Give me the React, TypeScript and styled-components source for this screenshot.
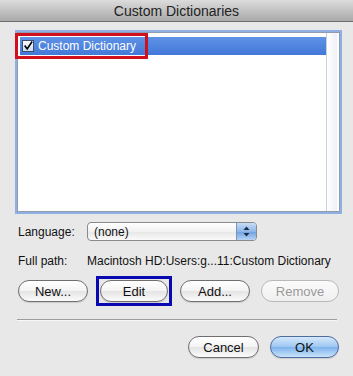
import React, { FC } from "react";
import styled, { createGlobalStyle, css } from "styled-components";

const GlobalStyle = createGlobalStyle`
  html, body {
    margin: 0;
    padding: 0;
    background: #e8e8e8;
  }
`;

const Window = styled.div`
  width: 353px;
  height: 376px;
  background: #e8e8e8;
  font-family: "Liberation Sans", Arial, sans-serif;
  color: #111;
  display: flex;
  flex-direction: column;
  overflow: hidden;
`;

const TitleBar = styled.div`
  height: 22px;
  box-sizing: border-box;
  display: flex;
  align-items: center;
  justify-content: center;
  background: linear-gradient(#dcdcdc, #bdbdbd 60%, #a9a9a9);
  border-bottom: 1px solid #6e6e6e;
  font-size: 14px;
  color: #222;
  padding-top: 1px;
`;

const Content = styled.div`
  display: flex;
  flex-direction: column;
  padding: 10px 13px 0 17px;
`;

const ListBox = styled.div`
  width: 323px;
  height: 180px;
  box-sizing: border-box;
  background: #fff;
  border: 1px solid #8f9bb0;
  box-shadow: 0 0 0 2px #8fb0e0;
  padding: 4px 2px 0 2px;
  display: flex;
`;

const ListBody = styled.div`
  flex: 1;
`;

const ScrollColumn = styled.div`
  width: 10px;
  margin-top: -4px;
  border-left: 1px solid #c9d0dc;
  background: linear-gradient(90deg, #ffffff, #eef1f6);
`;

const Row = styled.div<{ $selected?: boolean }>`
  height: 18px;
  display: flex;
  align-items: center;
  ${({ $selected }) =>
    $selected &&
    css`
      background: linear-gradient(#5f93e6, #4278d8);
      color: #fff;
    `}
`;

const Marked = styled.span`
  display: inline-flex;
  align-items: center;
  gap: 4px;
  padding: 0 8px 0 3px;
  height: 18px;
  outline: 3px solid #d0101c;
  outline-offset: 1px;
  margin-left: -1px;
`;

const Check = styled.span`
  width: 12px;
  height: 12px;
  box-sizing: border-box;
  border: 1px solid #3d4f70;
  background: linear-gradient(#ffffff, #c9dcf3);
  display: inline-flex;
  align-items: center;
  justify-content: center;
`;

const ItemText = styled.span`
  font-size: 12px;
`;

const FieldRow = styled.div<{ $top: number }>`
  display: flex;
  align-items: center;
  margin-top: ${({ $top }) => $top}px;
  font-size: 12px;
`;

const Label = styled.span`
  width: 69px;
  flex-shrink: 0;
  padding-left: 1px;
`;

const Popup = styled.div`
  width: 170px;
  height: 19px;
  box-sizing: border-box;
  border: 1px solid #8a8a8a;
  border-radius: 4px;
  background: linear-gradient(#ffffff, #f1f1f1 50%, #e6e6e6 51%, #fafafa);
  display: flex;
  align-items: center;
  overflow: hidden;
`;

const PopupText = styled.span`
  flex: 1;
  padding-left: 6px;
  font-size: 12px;
`;

const PopupArrows = styled.span`
  width: 19px;
  height: 100%;
  border-left: 1px solid #7e93b3;
  background: linear-gradient(#c6dcf6, #8fb6e8 50%, #6f9fe0 51%, #b6d3f5);
  display: flex;
  align-items: center;
  justify-content: center;
`;

const ButtonRow = styled.div<{ $top: number; $end?: boolean }>`
  display: flex;
  align-items: center;
  margin-top: ${({ $top }) => $top}px;
  justify-content: ${({ $end }) => ($end ? "flex-end" : "space-between")};
  gap: 11px;
  padding-left: 1px;
  padding-right: 1px;
`;

const Button = styled.button<{ $w: number; $primary?: boolean }>`
  flex: 0 0 ${({ $w }) => $w}px;
  width: ${({ $w }) => $w}px;
  height: 22px;
  box-sizing: border-box;
  border-radius: 11px;
  border: 1px solid #6f6f6f;
  background: linear-gradient(#ffffff, #f3f3f3 50%, #e4e4e4 51%, #fbfbfb);
  font-family: "Liberation Sans", Arial, sans-serif;
  font-size: 13px;
  color: #111;
  padding: 0;
  box-shadow: 0 1px 1px rgba(0, 0, 0, 0.12);
  &:disabled {
    border-color: #b9b9b9;
    color: #9a9a9a;
    background: linear-gradient(#fbfbfb, #efefef);
    box-shadow: none;
  }
  ${({ $primary }) =>
    $primary &&
    css`
      border-color: #4d6d9f;
      background: linear-gradient(#d6e8fb, #9cc6f2 50%, #7db2ec 51%, #c9e3fb);
    `}
`;

const FocusFrame = styled.span`
  display: inline-flex;
  flex: none;
  padding: 1px;
  border: 3px solid #0a08b0;
  margin: 0 -3px;
`;

const Separator = styled.div`
  height: 1px;
  width: 320px;
  margin-top: 13px;
  background: #9d9d9d;
  border-bottom: 1px solid #f8f8f8;
`;

const App: FC = () => {
  return (
    <>
      <GlobalStyle />
      <Window>
        <TitleBar>Custom Dictionaries</TitleBar>
        <Content>
          <ListBox>
            <ListBody>
              <Row $selected>
                <Marked>
                  <Check>
                    <svg width="12" height="12" viewBox="0 0 12 12">
                      <path
                        d="M2 5.5 L5 9.5 L11 0.5"
                        fill="none"
                        stroke="#000"
                        strokeWidth="2"
                      />
                    </svg>
                  </Check>
                  <ItemText>Custom Dictionary</ItemText>
                </Marked>
              </Row>
            </ListBody>
            <ScrollColumn />
          </ListBox>
          <FieldRow $top={10}>
            <Label>Language:</Label>
            <Popup>
              <PopupText>(none)</PopupText>
              <PopupArrows>
                <svg width="7" height="11" viewBox="0 0 7 11">
                  <path d="M3.5 0.5 L6.5 4 L0.5 4 Z" fill="#1d2d4a" />
                  <path d="M3.5 10.5 L6.5 7 L0.5 7 Z" fill="#1d2d4a" />
                </svg>
              </PopupArrows>
            </Popup>
          </FieldRow>
          <FieldRow $top={13}>
            <Label>Full path:</Label>
            <span>Macintosh HD:Users:g...11:Custom Dictionary</span>
          </FieldRow>
          <ButtonRow $top={8}>
            <Button $w={70}>New...</Button>
            <FocusFrame>
              <Button $w={68}>Edit</Button>
            </FocusFrame>
            <Button $w={70}>Add...</Button>
            <Button $w={78} disabled>
              Remove
            </Button>
          </ButtonRow>
          <Separator />
          <ButtonRow $top={15} $end>
            <Button $w={71}>Cancel</Button>
            <Button $w={69} $primary>
              OK
            </Button>
          </ButtonRow>
        </Content>
      </Window>
    </>
  );
};

export default App;
